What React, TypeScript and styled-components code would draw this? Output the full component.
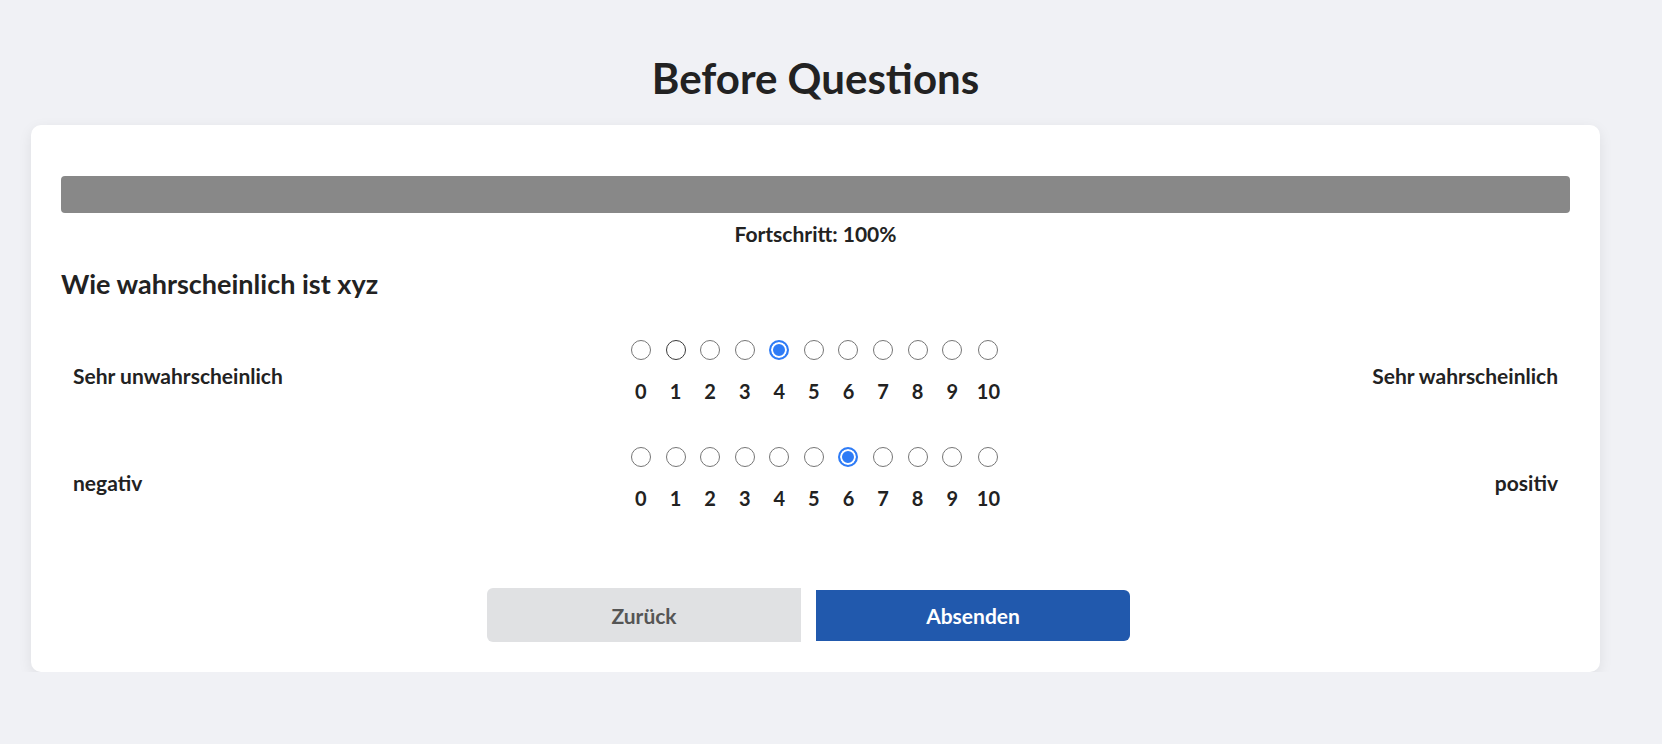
import React, { useState } from "react";
import styled, { createGlobalStyle } from "styled-components";

const GlobalStyle = createGlobalStyle`
  html, body {
    margin: 0;
    padding: 0;
    background: #f0f1f5;
    font-family: Lato, "Open Sans", sans-serif;
    color: #222;
  }
`;

const Page = styled.div`
  padding: 0 62px 0 31px;
  display: flex;
  flex-direction: column;
`;

const Title = styled.h1`
  margin: 0;
  padding: 53px 0 22px;
  text-align: center;
  font-size: 42px;
  line-height: 50px;
  font-weight: 700;
  color: #222;
`;

const Card = styled.div`
  background: #fff;
  border-radius: 10px;
  box-shadow: 0 4px 14px rgba(0, 0, 0, 0.08);
  padding: 51px 30px 30px;
  display: flex;
  flex-direction: column;
`;

const ProgressTrack = styled.div`
  height: 37px;
  border-radius: 4px;
  background: #e5e5e5;
  overflow: hidden;
`;

const ProgressFill = styled.div`
  height: 100%;
  background: #888888;
`;

const ProgressLabel = styled.div`
  text-align: center;
  font-size: 21px;
  font-weight: 700;
  line-height: 25px;
  margin-top: 8px;
  color: #222;
`;

const Question = styled.h2`
  margin: 21px 0 0;
  font-size: 27px;
  line-height: 33px;
  font-weight: 700;
  color: #222;
`;

const Scales = styled.div`
  display: flex;
  flex-direction: column;
  gap: 45px;
  margin-top: 40px;
  padding: 0 12px;
`;

const ScaleRow = styled.div`
  display: grid;
  grid-template-columns: 1fr auto 1fr;
  align-items: center;
`;

const SideLabel = styled.div<{ $align: "left" | "right" }>`
  font-size: 21px;
  font-weight: 700;
  line-height: 25px;
  color: #222;
  text-align: ${(p) => p.$align};
  padding-top: 8px;
`;

const Options = styled.div`
  display: flex;
  gap: 14.6px;
`;

const Option = styled.label`
  display: flex;
  flex-direction: column;
  align-items: center;
  gap: 20px;
  min-width: 20px;
  cursor: pointer;
`;

const Radio = styled.input<{ $dark?: boolean }>`
  appearance: none;
  margin: 0;
  width: 20px;
  height: 20px;
  border-radius: 50%;
  border: 1.5px solid ${(p) => (p.$dark ? "#3a3a3a" : "#767676")};
  background: #fff;
  box-sizing: border-box;
  cursor: pointer;

  &:checked {
    border: 2px solid #2f7cf6;
    box-shadow: inset 0 0 0 2px #fff;
    background: #2f7cf6;
  }
`;

const Num = styled.span`
  font-size: 20px;
  font-weight: 700;
  line-height: 22px;
  color: #222;
`;

const Actions = styled.div`
  display: flex;
  justify-content: center;
  align-items: center;
  gap: 15px;
  margin-top: 79px;
  padding-right: 14px;
`;

const Button = styled.button<{ $primary?: boolean }>`
  width: 314px;
  height: ${(p) => (p.$primary ? "51px" : "54px")};
  border: none;
  font-family: Lato, "Open Sans", sans-serif;
  font-size: 21px;
  font-weight: 700;
  cursor: pointer;
  background: ${(p) => (p.$primary ? "#2159ad" : "#e0e1e3")};
  color: ${(p) => (p.$primary ? "#fff" : "#555")};
  border-radius: ${(p) => (p.$primary ? "0 6px 6px 0" : "6px 0 0 6px")};
`;

const values = Array.from({ length: 11 }, (_, i) => i);

function Scale({
  name,
  left,
  right,
  initial,
  dark,
}: {
  name: string;
  left: string;
  right: string;
  initial: number;
  dark?: number;
}) {
  const [value, setValue] = useState(initial);
  return (
    <ScaleRow>
      <SideLabel $align="left">{left}</SideLabel>
      <Options>
        {values.map((v) => (
          <Option key={v}>
            <Radio
              type="radio"
              name={name}
              checked={value === v}
              $dark={dark === v}
              onChange={() => setValue(v)}
            />
            <Num>{v}</Num>
          </Option>
        ))}
      </Options>
      <SideLabel $align="right">{right}</SideLabel>
    </ScaleRow>
  );
}

export default function App() {
  return (
    <>
      <GlobalStyle />
      <Page>
        <Title>Before Questions</Title>
        <Card>
          <ProgressTrack>
            <ProgressFill style={{ width: "100%" }} />
          </ProgressTrack>
          <ProgressLabel>Fortschritt: 100%</ProgressLabel>
          <Question>Wie wahrscheinlich ist xyz</Question>
          <Scales>
            <Scale
              name="q1"
              left="Sehr unwahrscheinlich"
              right="Sehr wahrscheinlich"
              initial={4}
              dark={1}
            />
            <Scale name="q2" left="negativ" right="positiv" initial={6} />
          </Scales>
          <Actions>
            <Button>Zurück</Button>
            <Button $primary>Absenden</Button>
          </Actions>
        </Card>
      </Page>
    </>
  );
}
